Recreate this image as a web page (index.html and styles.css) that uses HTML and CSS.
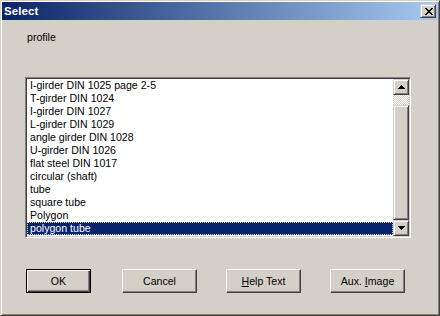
FILE: index.html
```html
<!DOCTYPE html>
<html>
<head>
<meta charset="utf-8">
<link rel="stylesheet" href="styles.css">
</head>
<body>
<div class="window">
  <div class="titlebar">
    <span class="title">Select</span>
    <div class="close raised">
      <svg width="8" height="7" viewBox="0 0 8 7" shape-rendering="crispEdges"><path fill="#000" d="M0 0h2v1H0z M6 0h2v1H6z M1 1h2v1H1z M5 1h2v1H5z M2 2h4v1H2z M3 3h2v1H3z M2 4h4v1H2z M1 5h2v1H1z M5 5h2v1H5z M0 6h2v1H0z M6 6h2v1H6z"/></svg>
    </div>
  </div>
  <div class="content">
    <div class="label">profile</div>
    <div class="listbox">
      <ul class="items">
        <li>I-girder DIN 1025 page 2-5</li>
        <li>T-girder DIN 1024</li>
        <li>I-girder DIN 1027</li>
        <li>L-girder DIN 1029</li>
        <li>angle girder DIN 1028</li>
        <li>U-girder DIN 1026</li>
        <li>flat steel DIN 1017</li>
        <li>circular (shaft)</li>
        <li>tube</li>
        <li>square tube</li>
        <li>Polygon</li>
        <li class="selected">polygon tube</li>
      </ul>
      <div class="scrollbar">
        <div class="sb-btn raised">
          <svg width="7" height="4" viewBox="0 0 7 4" shape-rendering="crispEdges"><path fill="#000" d="M3 0h1v1H3z M2 1h3v1H2z M1 2h5v1H1z M0 3h7v1H0z"/></svg>
        </div>
        <div class="track"><div class="thumb raised"></div></div>
        <div class="sb-btn raised">
          <svg width="7" height="4" viewBox="0 0 7 4" shape-rendering="crispEdges"><path fill="#000" d="M0 0h7v1H0z M1 1h5v1H1z M2 2h3v1H2z M3 3h1v1H3z"/></svg>
        </div>
      </div>
    </div>
    <div class="buttons">
      <button class="btn default">OK</button>
      <button class="btn">Cancel</button>
      <button class="btn"><u>H</u>elp Text</button>
      <button class="btn">Aux. <u>I</u>mage</button>
    </div>
  </div>
</div>
</body>
</html>
```
FILE: styles.css
```css
html, body {
  margin: 0;
  padding: 0;
  background: #d4d0c8;
}

.window {
  width: 440px;
  height: 316px;
  box-sizing: border-box;
  border: 1px solid;
  border-color: #d4d0c8 #404040 #404040 #d4d0c8;
  box-shadow: inset 1px 1px #fff, inset -1px -1px #808080;
  padding: 1px;
  margin: 0;
  display: flex;
  flex-direction: column;
  background: #d4d0c8;
  font-family: "Liberation Sans", Arial, sans-serif;
  font-size: 10.6px;
  color: #000;
}

.titlebar {
  height: 18px;
  display: flex;
  align-items: center;
  padding: 0 2px;
  background: linear-gradient(to right, #0a246a, #a6caf0);
  flex: none;
}

.title {
  flex: 1;
  color: #fff;
  font-weight: bold;
  font-size: 11.5px;
  line-height: 18px;
  letter-spacing: 0.1px;
}

.raised {
  box-sizing: border-box;
  background: #d4d0c8;
  border: 1px solid;
  border-color: #d4d0c8 #404040 #404040 #d4d0c8;
  box-shadow: inset 1px 1px #fff, inset -1px -1px #808080;
}

.close {
  width: 16px;
  height: 14px;
  display: flex;
  align-items: center;
  justify-content: center;
  padding-left: 1px;
}

.close svg, .sb-btn svg {
  display: block;
}

.content {
  flex: 1;
  display: flex;
  flex-direction: column;
}

.label {
  margin: 11px 0 0 25px;
  line-height: 13px;
}

.listbox {
  margin: 33px 0 0 23px;
  width: 386px;
  height: 161px;
  box-sizing: border-box;
  border: 1px solid;
  border-color: #808080 #fff #fff #808080;
  box-shadow: inset 1px 1px #404040, inset -1px -1px #d4d0c8;
  padding: 1px;
  display: flex;
  background: #fff;
}

.items {
  flex: 1;
  margin: 0;
  padding: 0;
  list-style: none;
  overflow: hidden;
}

.items li {
  height: 13px;
  line-height: 13px;
  padding-left: 3px;
  white-space: nowrap;
}

.items li.selected {
  background: #0a246a;
  color: #fff;
  outline: 1px dotted #d8d8c0;
  outline-offset: -1px;
}

.scrollbar {
  width: 16px;
  display: flex;
  flex-direction: column;
}

.sb-btn {
  height: 16px;
  flex: none;
  display: flex;
  align-items: center;
  justify-content: center;
}

.track {
  flex: 1;
  display: flex;
  flex-direction: column;
  background-color: #fff;
  background-image: conic-gradient(#d4d0c8 25%, #fff 0 50%, #d4d0c8 0 75%, #fff 0);
  background-size: 2px 2px;
}

.thumb {
  flex: 1;
  margin-top: 10px;
}

.buttons {
  display: flex;
  gap: 29px;
  margin: 31px 0 0 24px;
}

.btn {
  width: 75px;
  height: 24px;
  box-sizing: border-box;
  padding: 0;
  margin: 0;
  font: inherit;
  color: #000;
  background: #d4d0c8;
  border: 1px solid;
  border-color: #fff #404040 #404040 #fff;
  box-shadow: inset -1px -1px #808080;
  text-align: center;
  line-height: 20px;
}

.btn.default {
  width: 65px;
  margin-right: 2px;
  border-color: #000;
  box-shadow: inset 1px 1px #fff, inset -1px -1px #404040, inset -2px -2px #808080;
}
```
